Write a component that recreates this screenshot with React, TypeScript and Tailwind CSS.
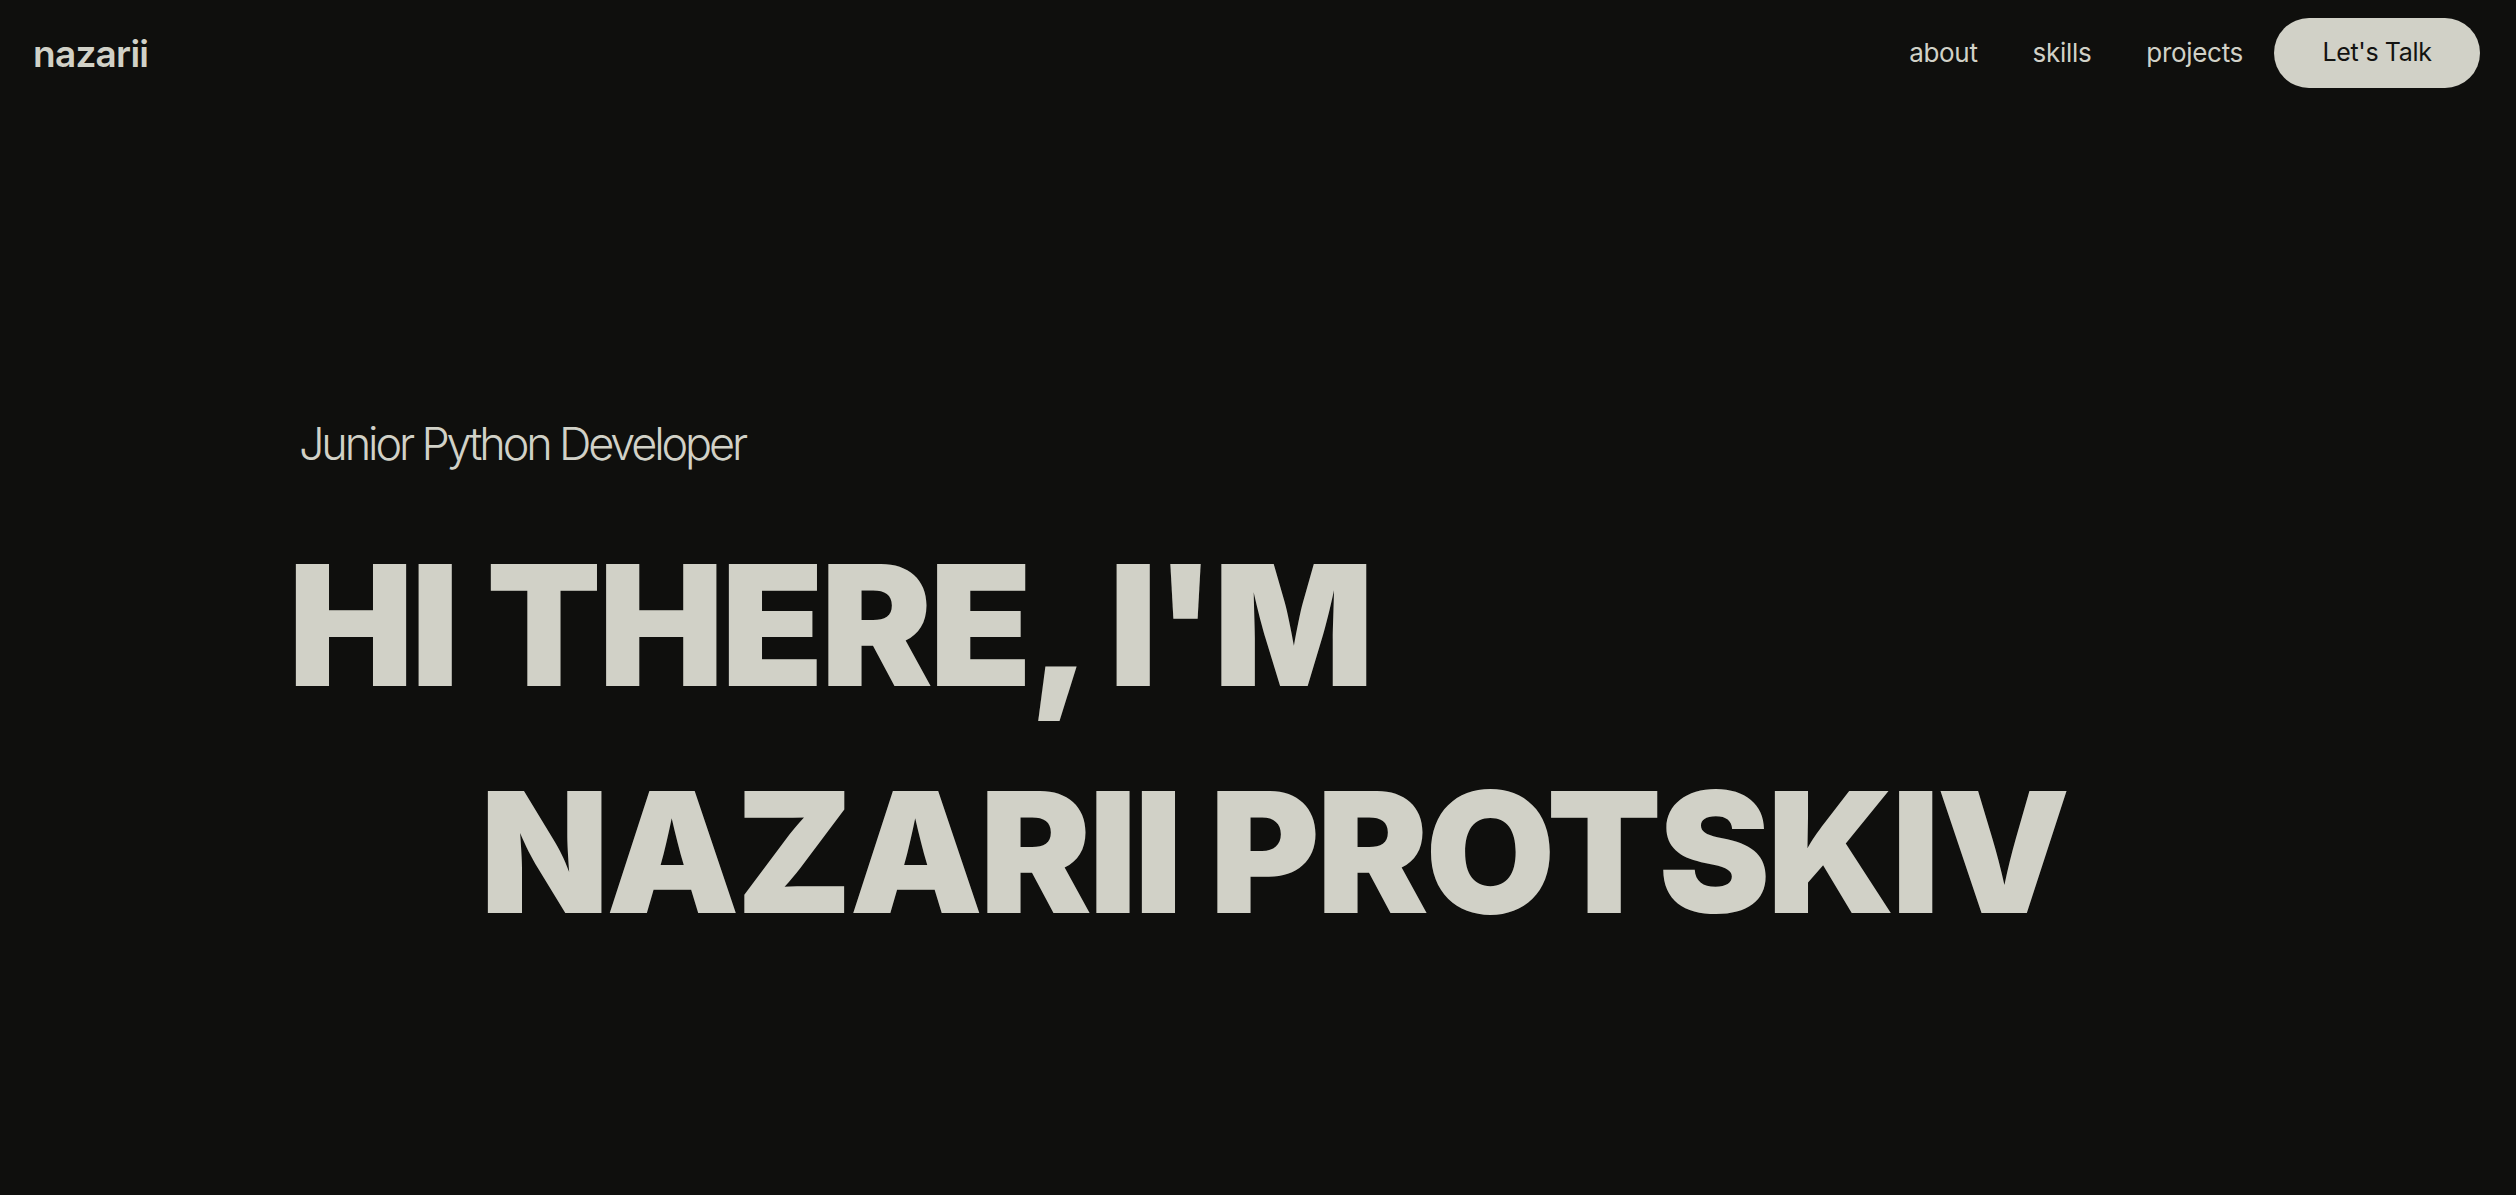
import React from "react";

const navLinks = ["about", "skills", "projects"];

const Header: React.FC = () => {
  return (
    <header className="flex items-center justify-between pl-[33px] pr-[36px] pt-[18px]">
      <a href="#" className="text-[37px] font-semibold tracking-[-0.02em] leading-none text-[#d1d1c7]">
        nazarii
      </a>
      <nav className="flex items-center">
        <ul className="flex items-center gap-[55px] mr-[31px] pt-[2px]">
          {navLinks.map((link) => (
            <li key={link}>
              <a href={`#${link}`} className="text-[26px] tracking-[-0.012em] leading-none text-[#d1d1c7]">
                {link}
              </a>
            </li>
          ))}
        </ul>
        <button className="h-[70px] w-[206px] rounded-full bg-[#d1d1c7] text-[25px] tracking-[-0.015em] text-[#131311]">
          Let's Talk
        </button>
      </nav>
    </header>
  );
};

const Hero: React.FC = () => {
  return (
    <section className="pl-[288px] pt-[333px]">
      {/* role */}
      <p className="pl-[11px] text-[45px] font-light tracking-[-0.07em] leading-none text-[#d1d1c7]">
        Junior Python Developer
      </p>
      {/* big name */}
      <h1 className="mt-[46px] font-black text-[168px] leading-[227px] tracking-[-0.02em] text-[#d1d1c7]">
        <span className="block">HI THERE, I'M</span>
        <span className="block pl-[192px]">NAZARII PROTSKIV</span>
      </h1>
    </section>
  );
};

export default function App() {
  return (
    <div
      className="min-h-screen w-full bg-[#0f0f0d] overflow-hidden"
      style={{ fontFamily: "Inter, 'Noto Sans', sans-serif" }}
    >
      <Header />
      <Hero />
    </div>
  );
}
